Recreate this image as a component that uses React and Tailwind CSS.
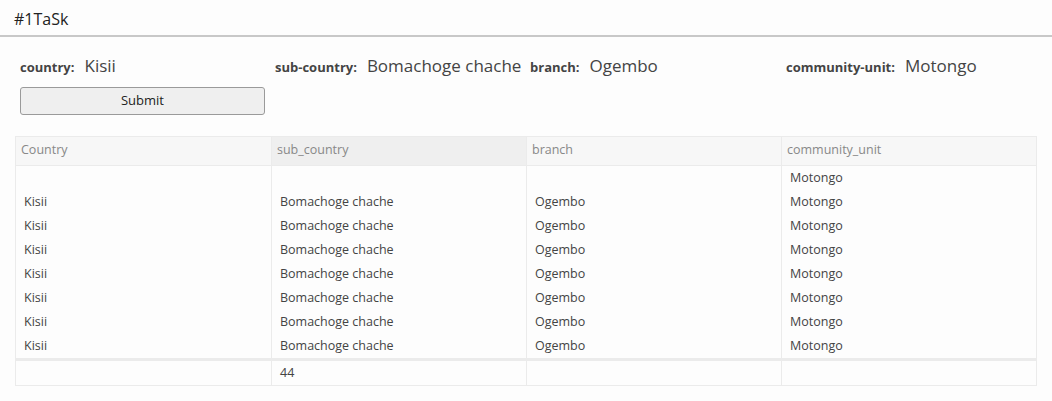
import React from 'react';

const fields = [
  { label: 'country:', value: 'Kisii' },
  { label: 'sub-country:', value: 'Bomachoge chache' },
  { label: 'branch:', value: 'Ogembo' },
  { label: 'community-unit:', value: 'Motongo' },
];

const columns = ['Country', 'sub_country', 'branch', 'community_unit'];

const rows = [
  ['', '', '', 'Motongo'],
  ...Array.from({ length: 7 }, () => ['Kisii', 'Bomachoge chache', 'Ogembo', 'Motongo']),
];

const App = () => {
  return (
    <div className="min-h-[401px] bg-[#fdfdfd] text-[#333]" style={{ fontFamily: '"Open Sans", "Noto Sans", sans-serif' }}>
      <div className="h-[37px] border-b-2 border-[#c8c8c8] px-[14px] pt-[7px] text-[16px] text-[#222]">
        #1TaSk
      </div>

      <div className="px-[20px] pt-[16px]">
        <div className="grid grid-cols-[255px_255px_256px_1fr] items-center">
          {fields.map((f) => (
            <div key={f.label} className="flex items-baseline gap-[10px] whitespace-nowrap">
              <span className="text-[13px] font-bold text-[#444]">{f.label}</span>
              <span className="text-[17px] text-[#444]">{f.value}</span>
            </div>
          ))}
        </div>
        <button className="mt-[8px] h-[28px] w-[245px] rounded-[3px] border border-[#9a9a9a] bg-[#efefef] text-[13px] text-[#222]">
          Submit
        </button>
      </div>

      <div className="mx-[15px] mt-[21px] w-[1022px] border border-[#ebebeb] text-[12.5px]">
        <div className="grid h-[29px] grid-cols-4 border-b border-[#ebebeb] bg-[#f7f7f7] text-[#888]">
          {columns.map((c, i) => (
            <div
              key={c}
              className={`flex items-center px-[5px] ${i > 0 ? 'border-l border-[#ebebeb]' : ''} ${i === 1 ? 'bg-[#efefef]' : ''}`}
            >
              {c}
            </div>
          ))}
        </div>
        {rows.map((r, ri) => (
          <div key={ri} className="grid h-[24px] grid-cols-4 text-[#444]">
            {r.map((v, i) => (
              <div
                key={i}
                className={`flex items-center px-[8px] ${ri === 0 ? 'pt-[1px]' : 'pt-[2px]'} ${i > 0 ? 'border-l border-[#ebebeb]' : ''}`}
              >
                {v}
              </div>
            ))}
          </div>
        ))}
        <div className="grid h-[27px] grid-cols-4 border-t-[3px] border-[#ebebeb] text-[#444]">
          {['', '44', '', ''].map((v, i) => (
            <div key={i} className={`flex items-center px-[8px] pt-[2px] ${i > 0 ? 'border-l border-[#ebebeb]' : ''}`}>
              {v}
            </div>
          ))}
        </div>
      </div>
    </div>
  );
};

export default App;
